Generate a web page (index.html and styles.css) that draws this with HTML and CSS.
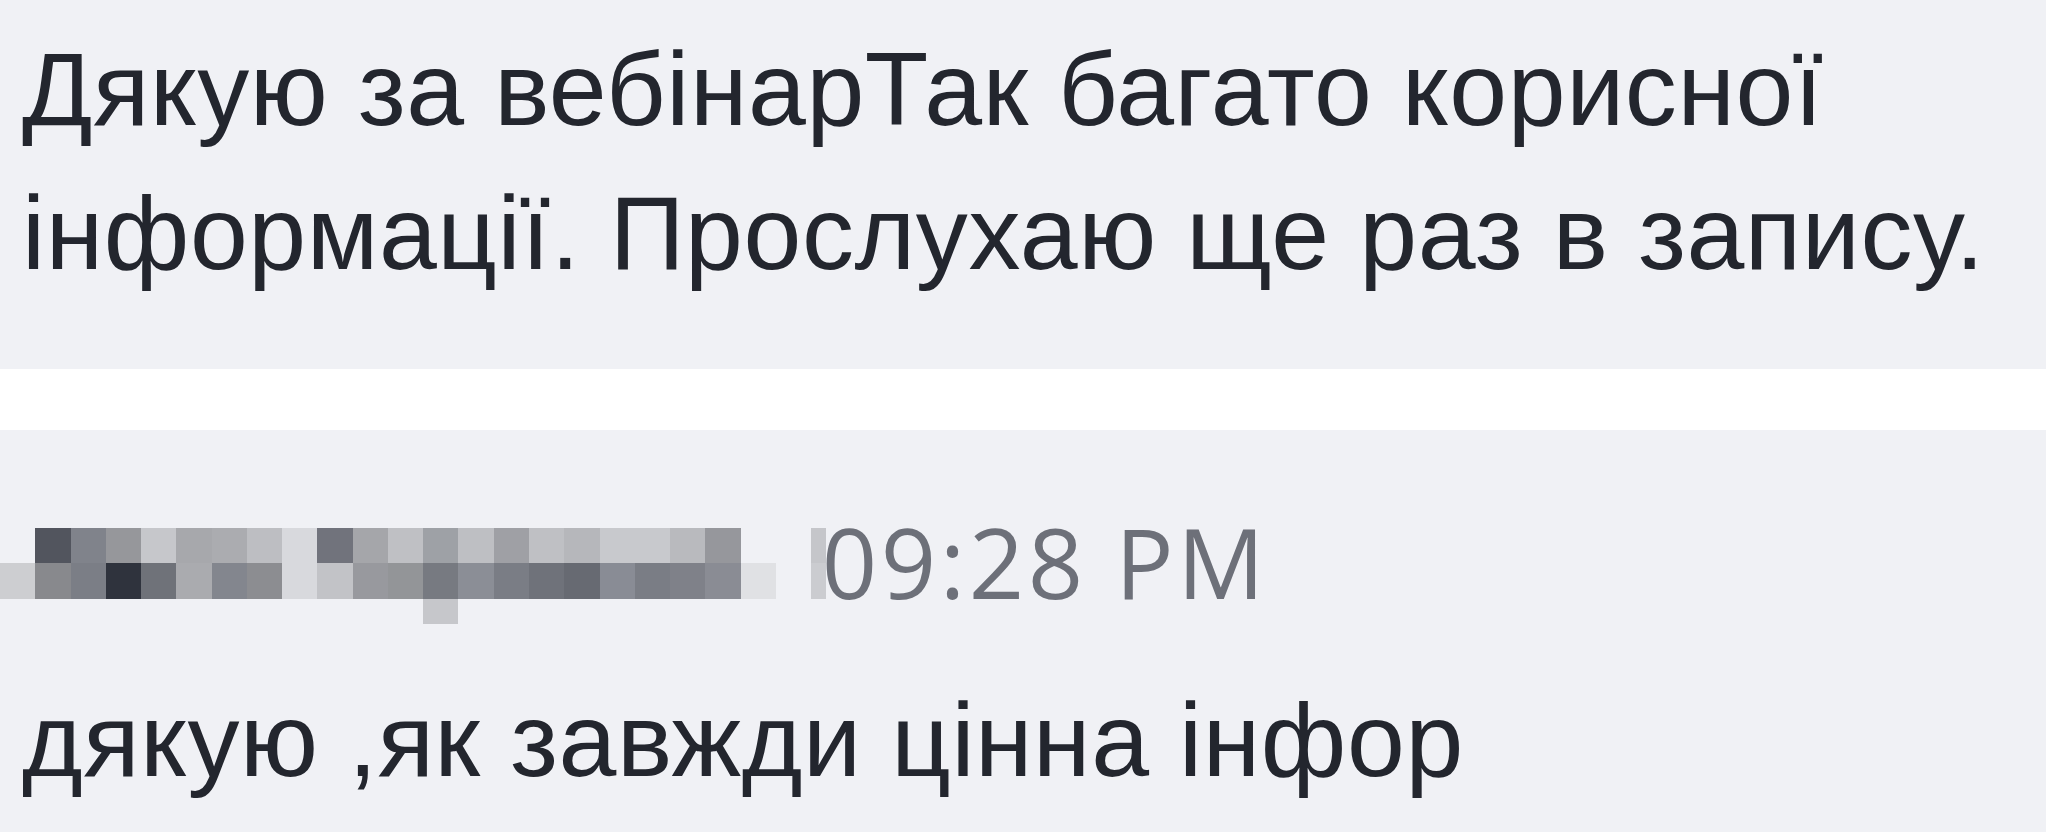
FILE: index.html
```html
<!DOCTYPE html>
<html lang="uk">
<head>
    <meta charset="UTF-8">
    <meta name="viewport" content="width=device-width, initial-scale=1.0">
    <title>Чат вебінару</title>
    <link rel="stylesheet" href="styles.css">
</head>
<body>
    <div class="chat">
        <div class="message message-first">
            <p class="message-text">Дякую за вебінарТак багато корисної інформації. Прослухаю ще раз в запису.</p>
        </div>

        <div class="message">
            <div class="message-header">
                <div class="mosaic" id="authorName"></div>
                <span class="mosaic-edge"></span>
                <span class="message-time">09:28 PM</span>
            </div>
            <p class="message-text">дякую ,як завжди цінна інфор</p>
        </div>
    </div>

    <script>
        // ім'я автора приховане мозаїкою: три ряди клітинок
        var mosaicRows = [
            [null, '#52555e', '#80838b', '#96979b', '#c6c7cb', '#a7a8ac', '#abacb0', '#bdbec2', '#d8d9dd', '#71737c', '#a5a6aa',
             '#bfc0c4', '#9ea1a6', '#bebfc3', '#9fa0a5', '#bfc0c4', '#b6b7bb', '#c8c9cd', '#c8c9cd', '#b9babe', '#96979c', null],
            ['#cdced1', '#88898d', '#7b7e86', '#2f333d', '#6f7279', '#aaabaf', '#83868e', '#8c8d91', '#d8d9dd', '#c2c3c7', '#98999e',
             '#939598', '#777a81', '#8b8e96', '#7a7d85', '#6f727a', '#676a72', '#898c95', '#7a7d85', '#7f8189', '#8a8c94', '#e0e1e4'],
            [null, null, null, null, null, null, null, null, null, null, null, null, '#c6c7cb']
        ];

        var mosaic = document.getElementById('authorName');
        mosaicRows.forEach(function(row) {
            row.forEach(function(color) {
                var cell = document.createElement('span');
                cell.className = 'mosaic-cell';
                if (color) {
                    cell.style.background = color;
                }
                mosaic.appendChild(cell);
            });
            // добиваємо ряд порожніми клітинками до 22
            for (var i = row.length; i < 22; i++) {
                var empty = document.createElement('span');
                empty.className = 'mosaic-cell';
                mosaic.appendChild(empty);
            }
        });
    </script>
</body>
</html>
```

FILE: styles.css
```css
body {
    margin: 0;
    background-color: #f0f1f5;
    font-family: "Liberation Sans", Arial, sans-serif;
    color: #23262e;
}

.chat {
    display: flex;
    flex-direction: column;
    gap: 61px;
    background-color: #ffffff;
}

.message {
    background-color: #f0f1f5;
    padding: 0 22px;
}

.message-first {
    padding-top: 17px;
    padding-bottom: 64px;
}

.message-text {
    margin: 0;
    font-size: 104px;
    line-height: 144px;
    letter-spacing: 0.6px;
    white-space: nowrap;
}

.message-first .message-text {
    white-space: normal;
    width: 2000px;
}

.message-header {
    display: flex;
    align-items: flex-start;
    margin-left: -22px;
    padding-top: 98px;
    margin-bottom: 44px;
    height: 96px;
}

.mosaic {
    display: grid;
    grid-template-columns: repeat(22, 35.27px);
    grid-template-rows: 35px 36px 25px;
}

.mosaic-cell {
    display: block;
}

.mosaic-edge {
    width: 15px;
    height: 71px;
    margin-left: 35px;
    background: linear-gradient(#c5c6ca 0, #c5c6ca 35px, #cbccd0 35px);
}

.message-time {
    margin-left: -4px;
    margin-top: -2px;
    font-family: "Open Sans", "Liberation Sans", sans-serif;
    font-size: 97px;
    line-height: 70px;
    letter-spacing: 3.5px;
    color: #6d7079;
}
```
